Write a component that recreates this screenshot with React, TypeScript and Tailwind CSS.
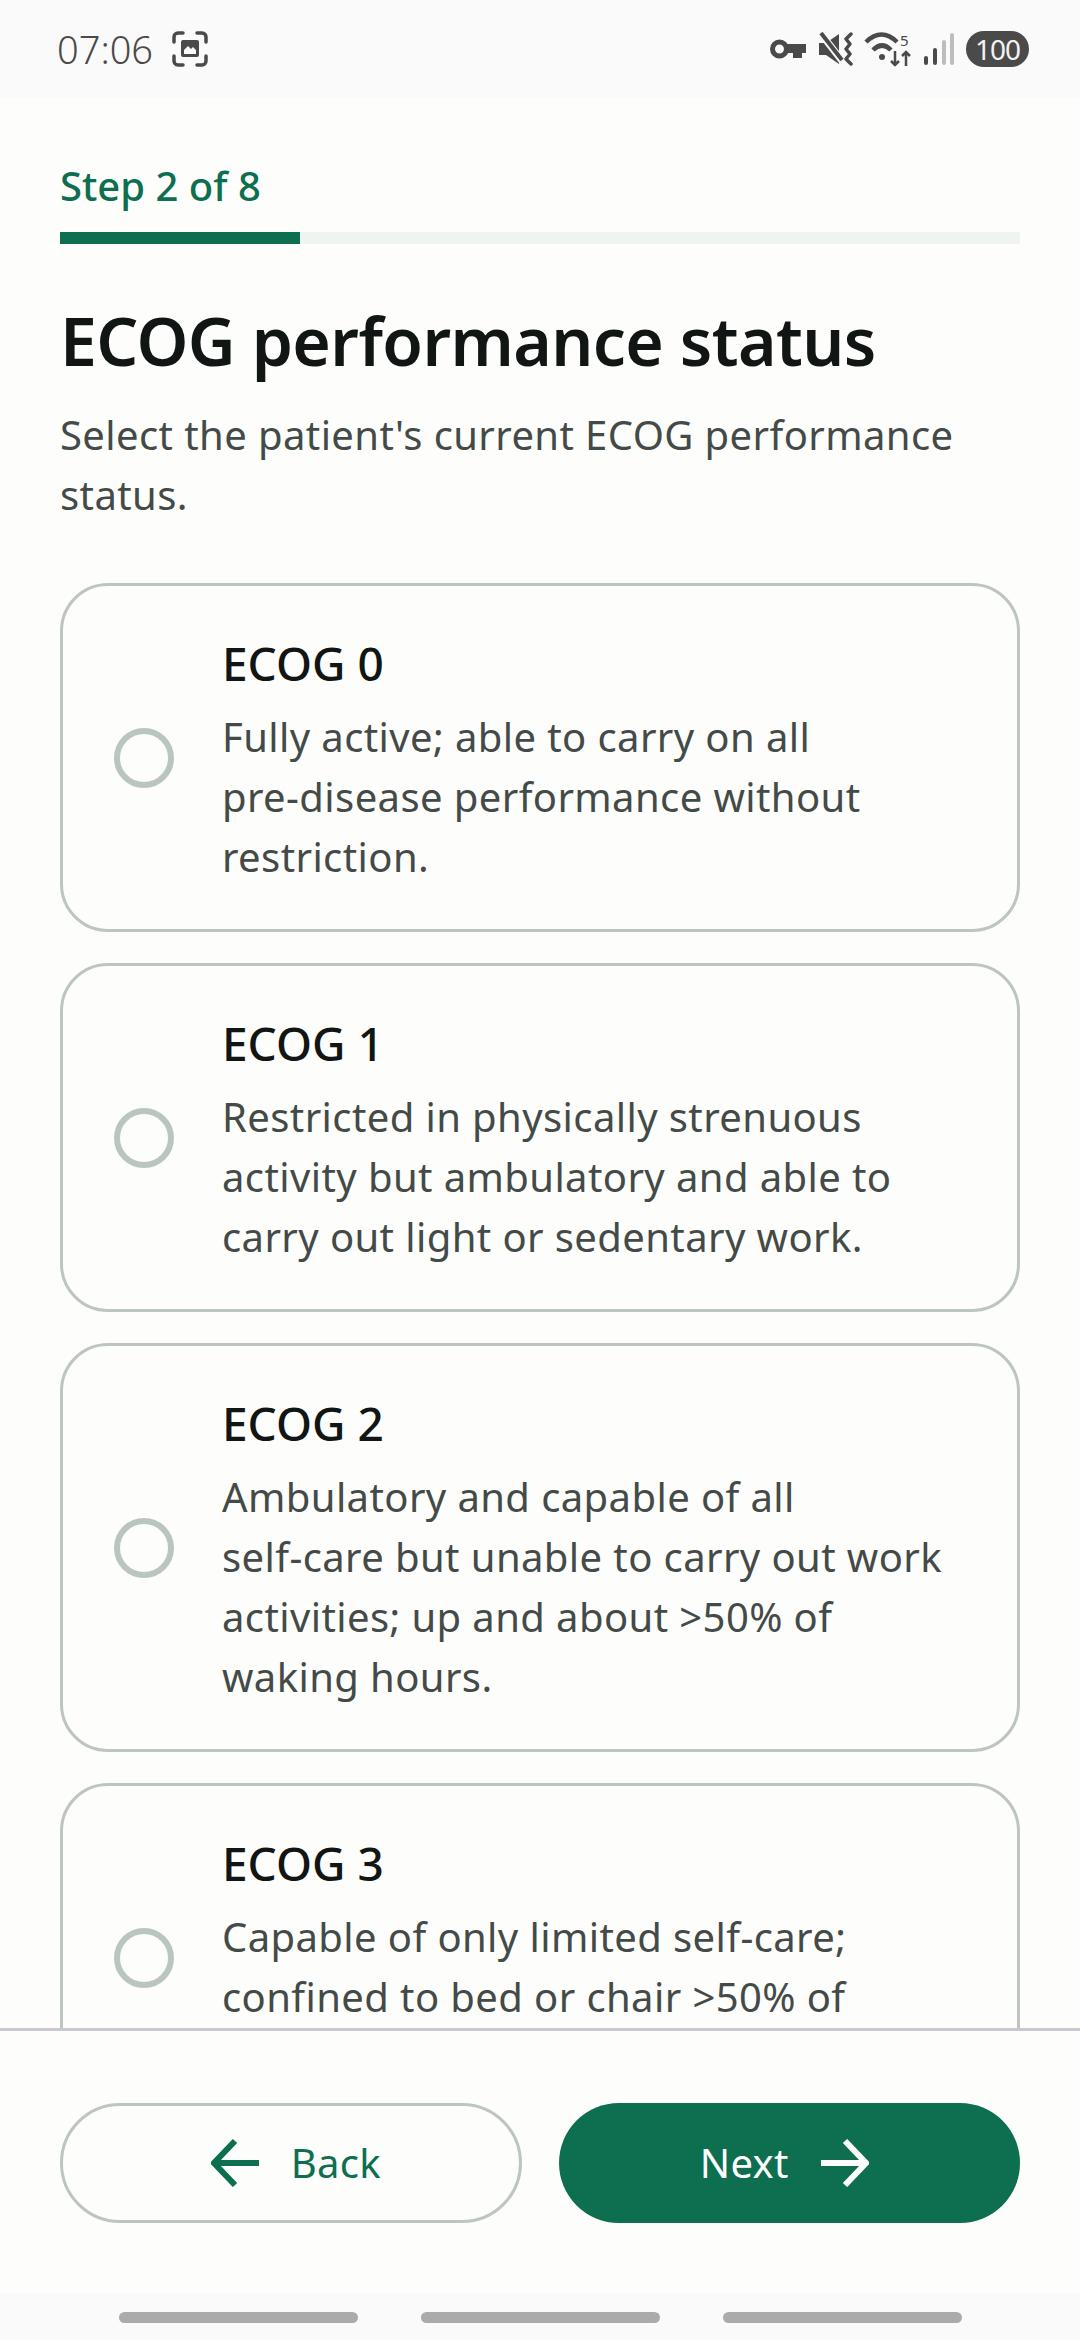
const options = [
  {
    title: 'ECOG 0',
    lines: ['Fully active; able to carry on all', 'pre-disease performance without', 'restriction.'],
  },
  {
    title: 'ECOG 1',
    lines: ['Restricted in physically strenuous', 'activity but ambulatory and able to', 'carry out light or sedentary work.'],
  },
  {
    title: 'ECOG 2',
    lines: ['Ambulatory and capable of all', 'self-care but unable to carry out work', 'activities; up and about >50% of', 'waking hours.'],
  },
  {
    title: 'ECOG 3',
    lines: ['Capable of only limited self-care;', 'confined to bed or chair >50% of', 'waking hours.'],
  },
]

function StatusBar() {
  return (
    <div className="flex h-[98px] shrink-0 items-center justify-between bg-[#fafafa] pl-[57px] pr-[51px] text-[#4a4a4a]">
      <div className="flex items-center gap-[19px]">
        <span className="text-[38px] font-light leading-none">07:06</span>
        <svg width="36" height="36" viewBox="0 0 36 36" fill="none">
          <path d="M2 11V6a4 4 0 014-4h5M25 2h5a4 4 0 014 4v5M34 25v5a4 4 0 01-4 4h-5M11 34H6a4 4 0 01-4-4v-5" stroke="currentColor" strokeWidth="3.5" strokeLinecap="round" />
          <path fillRule="evenodd" d="M11 9h14a2 2 0 012 2v13a2 2 0 01-2 2H11a2 2 0 01-2-2V11a2 2 0 012-2zm1 14h12v-4l-3-3-2 2-3-3-4 4v4z" fill="currentColor" />
        </svg>
      </div>
      <div className="flex items-center">
        <svg width="36" height="20" viewBox="0 0 36 20" fill="none">
          <circle cx="9.5" cy="10" r="7" stroke="currentColor" strokeWidth="5" />
          <path d="M16 5h20v9h-4v5h-9v-5h-7z" fill="currentColor" />
        </svg>
        <svg className="ml-[12px]" width="36" height="34" viewBox="0 0 36 34" fill="none">
          <path d="M1 11h7L21 2v30L8 23H1z" fill="currentColor" />
          <path d="M4 3l21 27" stroke="#fafafa" strokeWidth="7" />
          <path d="M3 1l21 27" stroke="currentColor" strokeWidth="4" />
          <path d="M33 2l-5 5 4 5-4 5 4 5-4 5 5 5" stroke="currentColor" strokeWidth="3.5" strokeLinecap="round" strokeLinejoin="round" />
        </svg>
        <div className="relative ml-[10px] h-[36px] w-[48px]">
          <svg width="48" height="36" viewBox="0 0 48 36" fill="none">
            <path d="M2 11C12 1 23 1 33 11M9 19c6-6 12-6 18 0" stroke="currentColor" strokeWidth="4.5" />
            <circle cx="18" cy="26" r="3" fill="currentColor" />
            <path d="M31 20v14m-4-4 4 4 4-4M42 35V21m-4 4 4-4 4 4" stroke="currentColor" strokeWidth="2.5" />
          </svg>
          <span className="absolute left-[36px] top-[1px] text-[15px] leading-[16px]">5</span>
        </div>
        <svg className="ml-[11px]" width="32" height="34" viewBox="0 0 32 34" fill="none">
          <rect x="1" y="24" width="4" height="9" rx="2" fill="currentColor" />
          <rect x="10" y="16" width="4" height="17" rx="2" fill="currentColor" />
          <rect x="19" y="8" width="4" height="25" rx="2" fill="#bdbdbd" />
          <rect x="27" y="1" width="4" height="32" rx="2" fill="#bdbdbd" />
        </svg>
        <div className="ml-[11px] flex h-[36px] w-[63px] items-center justify-center rounded-full bg-[#4a4a4a] text-[28px] leading-none tracking-[-1px] text-[#f2f2f2]">
          100
        </div>
      </div>
    </div>
  )
}

function Radio() {
  return <div className="mb-[3px] h-[60px] w-[60px] shrink-0 rounded-full border-[6px] border-[#bbc5c0]" />
}

function OptionCard({ title, lines }: { title: string; lines: string[] }) {
  return (
    <div className="flex shrink-0 items-center gap-[48px] rounded-[48px] border-[3px] border-[#bcc5c0] pb-[42px] pl-[51px] pr-[30px] pt-[46px]">
      <Radio />
      <div>
        <div className="text-[46px] font-medium leading-[62px] text-[#111513]">{title}</div>
        <div className="mt-[13px] text-[40px] leading-[60px] tracking-[0.4px] text-[#434a47]">
          {lines.map((l) => (
            <div key={l} className="whitespace-nowrap">{l}</div>
          ))}
        </div>
      </div>
    </div>
  )
}

export default function App() {
  return (
    <div className="flex h-[2340px] w-[1080px] flex-col overflow-hidden bg-[#fdfdfb] font-['Noto_Sans',sans-serif]">
      <StatusBar />

      <div className="min-h-0 flex-1 overflow-hidden px-[60px] pt-[60px]">
        <div className="text-[40px] font-medium leading-[56px] text-[#0e6e50]">Step 2 of 8</div>
        <div className="mt-[18px] h-[12px] w-full bg-[#eff4f1]">
          <div className="h-full w-1/4 bg-[#0e6e50]" />
        </div>
        <h1 className="mt-[52px] text-[66px] font-semibold leading-[88px] tracking-[-0.6px] text-[#111513]">ECOG performance status</h1>
        <p className="mt-[21px] text-[40px] leading-[60px] tracking-[0.4px] text-[#434a47]">
          Select the patient's current ECOG performance
          <br />
          status.
        </p>
        <div className="mt-[58px] flex flex-col gap-[31px]">
          {options.map((o) => (
            <OptionCard key={o.title} title={o.title} lines={o.lines} />
          ))}
        </div>
      </div>

      {/* Bottom actions */}
      <div className="grid h-[265px] shrink-0 grid-cols-2 gap-[37px] border-t-[3px] border-[#cbc8d3] px-[60px] pt-[72px]">
        <button className="flex h-[120px] items-center justify-center gap-[32px] rounded-full border-[3px] border-[#bcc5c0] pl-[10px] text-[40px] tracking-[0.3px] text-[#0e6e50]">
          <svg width="48" height="48" viewBox="0 0 48 48" fill="none">
            <path d="M24 2L3 24l21 22M3 24h45" stroke="currentColor" strokeWidth="6" />
          </svg>
          Back
        </button>
        <button className="flex h-[120px] items-center justify-center gap-[32px] rounded-full bg-[#0e6e50] pr-[10px] text-[40px] tracking-[0.3px] text-[#fdfdfb]">
          Next
          <svg width="48" height="48" viewBox="0 0 48 48" fill="none">
            <path d="M24 2l21 22-21 22M45 24H0" stroke="currentColor" strokeWidth="6" />
          </svg>
        </button>
      </div>

      <div className="flex h-[47px] shrink-0 justify-center gap-[63px] bg-[#fafafa] pt-[19px]">
        <div className="h-[11px] w-[239px] rounded-full bg-[#ababab]" />
        <div className="h-[11px] w-[239px] rounded-full bg-[#ababab]" />
        <div className="h-[11px] w-[239px] rounded-full bg-[#ababab]" />
      </div>
    </div>
  )
}
